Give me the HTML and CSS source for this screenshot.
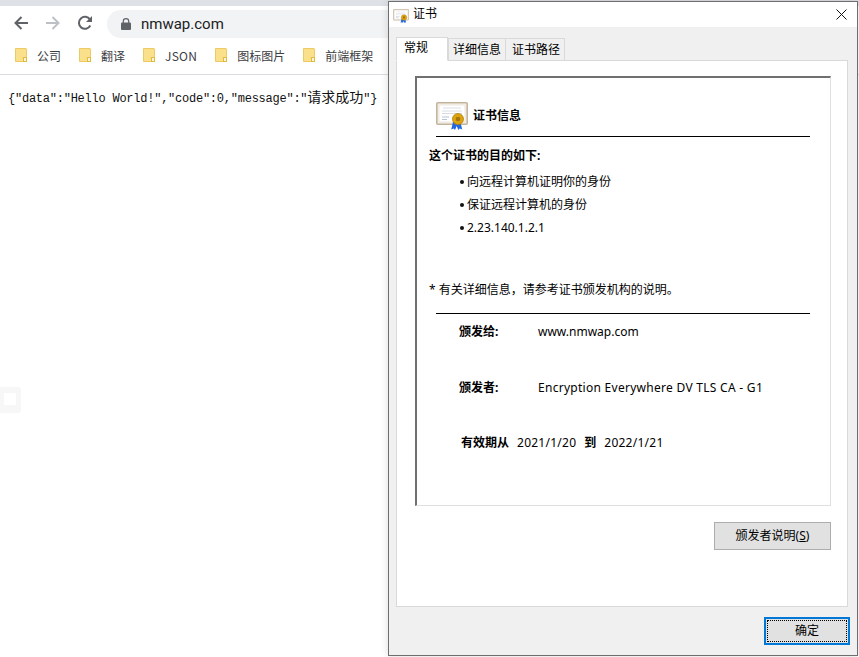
FILE: index.html
```html
<!DOCTYPE html>
<html lang="zh">
<head>
<meta charset="utf-8">
<title>证书</title>
<link rel="stylesheet" href="styles.css">
</head>
<body>
<svg class="defs" width="0" height="0" aria-hidden="true">
  <symbol id="folder" viewBox="0 0 12 14">
    <path d="M.5.5h10.6l.4.4v12.6H.5z" fill="#fbe08c" stroke="#eccb62"/>
    <rect x="8.5" y="9.5" width="3" height="4" fill="#fff6d8" stroke="#e2b93f"/>
  </symbol>
  <symbol id="cert" viewBox="0 0 32 28">
    <rect x=".8" y=".8" width="30.4" height="21.4" rx="1" fill="#f7f3ec" stroke="#c4b49c" stroke-width="1.6"/>
    <rect x="3" y="3" width="26" height="17" fill="#fff" stroke="#e2dacd" stroke-width=".6"/>
    <path d="M7 6h18M6 9h20M6 11.500h20" stroke="#cfd4dc" stroke-width=".8"/>
    <path d="M6 15h7M6 17.500h5" stroke="#b9c3d4" stroke-width="1"/>
    <path d="M17 20l-1.800 7.500 2.500-1 1.300 1.500 1.700-4 1.700 4 1.300-1.500 2.500 1-1.800-7.500z" fill="#2468e0"/>
    <circle cx="22" cy="17" r="5.500" fill="#dba50f" stroke="#b57f0c" stroke-width=".8"/>
    <circle cx="22" cy="17" r="2.300" fill="#a8730a"/>
  </symbol>
</svg>

<header class="browser">
  <div class="tabstrip"></div>
  <div class="toolbar">
    <svg class="nav nav-back" viewBox="0 0 16 16"><path d="M15 8H2.500M8.500 2 2.500 8l6 6" fill="none" stroke="#5f6368" stroke-width="2"/></svg>
    <svg class="nav nav-forward" viewBox="0 0 16 16"><path d="M1 8h12.500M7.500 2l6 6-6 6" fill="none" stroke="#bdc1c6" stroke-width="2"/></svg>
    <svg class="nav nav-reload" viewBox="0 0 16 16"><path d="M13.300 10.500A6 6 0 1 1 13 4.600" fill="none" stroke="#5f6368" stroke-width="2"/><path d="M15 1v6H9z" fill="#5f6368"/></svg>
    <div class="omnibox">
      <svg class="lock" viewBox="0 0 10 12"><path d="M2.300 5V3.300a2.700 2.700 0 0 1 5.400 0V5" fill="none" stroke="#5f6368" stroke-width="1.200"/><rect y="4.500" width="10" height="7.500" rx="1" fill="#5f6368"/></svg>
      <span class="url">nmwap.com</span>
    </div>
  </div>
  <nav class="bookmarks">
    <a class="bookmark"><svg class="folder"><use href="#folder"/></svg>公司</a>
    <a class="bookmark"><svg class="folder"><use href="#folder"/></svg>翻译</a>
    <a class="bookmark bookmark-latin"><svg class="folder"><use href="#folder"/></svg>JSON</a>
    <a class="bookmark"><svg class="folder"><use href="#folder"/></svg>图标图片</a>
    <a class="bookmark"><svg class="folder"><use href="#folder"/></svg>前端框架</a>
  </nav>
</header>

<pre class="json">{"data":"Hello World!","code":0,"message":"<span class="json-cjk">请求成功</span>"}</pre>

<div class="side-widget"><span></span></div>

<section class="dialog">
  <div class="titlebar">
    <svg class="title-icon"><use href="#cert"/></svg>
    <span class="title-text">证书</span>
    <svg class="close" viewBox="0 0 11 11"><path d="M.5.500l10 10M10.500.500l-10 10" stroke="#111" fill="none"/></svg>
  </div>
  <div class="dialog-body">
    <div class="tabs">
      <div class="tab tab-active">常规</div>
      <div class="tab tab-details">详细信息</div>
      <div class="tab tab-path">证书路径</div>
    </div>
    <div class="panel">
      <div class="cert-box">
        <div class="cert-head">
          <svg class="cert-icon"><use href="#cert"/></svg>
          <strong class="cert-title">证书信息</strong>
        </div>
        <div class="purpose-title">这个证书的目的如下:</div>
        <ul class="purposes">
          <li>向远程计算机证明你的身份</li>
          <li>保证远程计算机的身份</li>
          <li>2.23.140.1.2.1</li>
        </ul>
        <div class="note">* 有关详细信息，请参考证书颁发机构的说明。</div>
        <div class="rule"></div>
        <div class="field field-to"><b>颁发给:</b><span>www.nmwap.com</span></div>
        <div class="field field-by"><b>颁发者:</b><span>Encryption Everywhere DV TLS CA - G1</span></div>
        <div class="validity"><b>有效期从</b><span>2021/1/20</span><b>到</b><span>2022/1/21</span></div>
      </div>
      <div class="panel-actions"><button class="btn btn-issuer"><span>颁发者说明(<u>S</u>)</span></button></div>
    </div>
    <div class="dialog-actions"><button class="btn btn-ok"><span>确定</span></button></div>
  </div>
</section>
</body>
</html>
```
FILE: styles.css
```css
* { box-sizing: border-box; }
html, body { height: 100%; }
body {
  margin: 0;
  background: #fff;
  overflow: hidden;
  font-family: "Noto Sans", "Noto Sans CJK SC", sans-serif;
  font-size: 12px;
  color: #000;
}
.defs { position: absolute; }

.browser { display: flex; flex-direction: column; }
.tabstrip { height: 6px; background: #dee1e6; }
.toolbar { height: 34px; display: flex; align-items: center; padding-left: 13px; background: #fff; }
.nav { width: 16px; height: 16px; flex: none; margin-right: 16px; }
.nav-reload { margin-right: 14px; }
.omnibox {
  width: 400px; height: 28px; margin-top: 1px; padding-left: 14px;
  display: flex; align-items: center;
  border-radius: 14px; background: #f1f3f4;
}
.lock { width: 10px; height: 12px; margin-right: 10px; }
.url { font-family: "Roboto", sans-serif; font-size: 15px; color: #202124; }

.bookmarks {
  height: 35px; display: flex; align-items: center; padding: 0 0 4px 15px;
  background: #fff; border-bottom: 1px solid #dadce0;
  font-family: "Noto Sans CJK SC", sans-serif;
}
.bookmark { display: flex; align-items: center; margin-right: 18px; color: #3c4043; }
.bookmark-latin { letter-spacing: .25px; }
.folder { width: 12px; height: 14px; margin-right: 10px; }

.json {
  margin: 0; padding: 13px 8px 0;
  font-family: "Liberation Mono", "Noto Sans CJK SC", monospace;
  font-size: 12px; line-height: 16px; letter-spacing: -.24px; color: #111;
}
.json-cjk { font-family: "Noto Sans CJK SC", sans-serif; font-size: 14px; letter-spacing: 0; }

.side-widget {
  position: absolute; left: 0; top: 387px; width: 21px; height: 26px;
  padding: 6px 0 0 4px;
  background: #f7f7f7; border-radius: 0 3px 3px 0;
}
.side-widget span { display: block; width: 12px; height: 12px; background: #fff; }

.dialog {
  position: absolute; left: 388px; top: 1px; width: 470px; height: 655px;
  display: flex; flex-direction: column;
  background: #f0f0f0; border: 1px solid #6e6e6e;
  box-shadow: 0 0 8px rgba(0, 0, 0, .14);
  font-family: "Noto Sans", "Noto Sans CJK SC", sans-serif;
}
.titlebar { height: 25px; flex: none; display: flex; align-items: center; padding: 0 10px 0 4px; background: #fff; }
.title-icon { width: 16px; height: 14px; margin-right: 4px; margin-top: 3px; }
.title-text { flex: 1; font-size: 12px; margin-bottom: 3px; }
.close { width: 11px; height: 11px; }

.dialog-body { flex: 1; padding: 9px 9px 0 7px; display: flex; flex-direction: column; }
.tabs { height: 24px; display: flex; align-items: flex-end; position: relative; z-index: 1; }
.tab {
  height: 22px; padding-bottom: 2px;
  display: flex; align-items: center;
  background: #f0f0f0; border: 1px solid #d9d9d9; border-bottom: 0; font-size: 12px;
}
.tab-details { width: 58px; padding-left: 4px; }
.tab-path { width: 60px; margin-left: -1px; padding-left: 6px; }
.tab-active { height: 24px; width: 52px; padding: 0 0 5px 7px; background: #fff; border-bottom: 1px solid #fff; margin-bottom: -1px; }

.panel { height: 547px; flex: none; padding: 15px 16px 0 18px; background: #fff; border: 1px solid #d9d9d9; }
.cert-box {
  height: 430px; padding: 0 0 0 12px;
  border: 1px solid #e0e0e0; border-top: 2px solid #707070; border-left: 2px solid #707070;
}
.cert-head {
  width: 374px; height: 59px; margin-left: 7px; padding: 24px 0 0;
  display: flex; align-items: flex-start;
  border-bottom: 1px solid #000;
}
.cert-icon { width: 32px; height: 28px; margin-right: 5px; }
.cert-title { font-size: 12px; line-height: 28px; font-weight: 700; }
.purpose-title { margin-top: 10px; line-height: 18px; font-weight: 700; }
.purposes { list-style: none; margin: 8px 0 0; padding: 0 0 0 31px; }
.purposes li { height: 23px; line-height: 18px; display: flex; }
.purposes li::before { content: ""; flex: none; width: 4px; height: 4px; margin: 7px 3px 0 0; border-radius: 50%; background: #111; }
.note { margin-top: 39px; line-height: 18px; }
.rule { width: 374px; height: 1px; margin: 14px 0 0 7px; background: #000; }
.field { display: flex; padding-left: 30px; line-height: 18px; }
.field b { width: 79px; }
.field-to { margin-top: 9px; }
.field-by { margin-top: 38px; }
.field-by span { letter-spacing: .28px; }
.validity { display: flex; margin-top: 37px; padding-left: 32px; line-height: 18px; }
.validity span { letter-spacing: .25px; }
.validity span:nth-child(2) { margin: 0 8px; }
.validity span:nth-child(4) { margin-left: 8px; }

.btn {
  display: block; padding: 0; font: inherit; font-size: 12px; color: #000;
  background: #e1e1e1; border: 1px solid #adadad; border-radius: 0;
}
.panel-actions { display: flex; justify-content: flex-end; margin-top: 16px; }
.btn-issuer { width: 117px; height: 28px; padding-bottom: 2px; }
.dialog-actions { display: flex; justify-content: flex-end; margin: 10px -2px 0 0; }
.btn-ok { width: 86px; height: 28px; padding: 1px; border: 2px solid #0078d7; }
.btn-ok span { display: flex; align-items: center; justify-content: center; height: 100%; padding-bottom: 2px; border: 1px dotted #000; }
```
